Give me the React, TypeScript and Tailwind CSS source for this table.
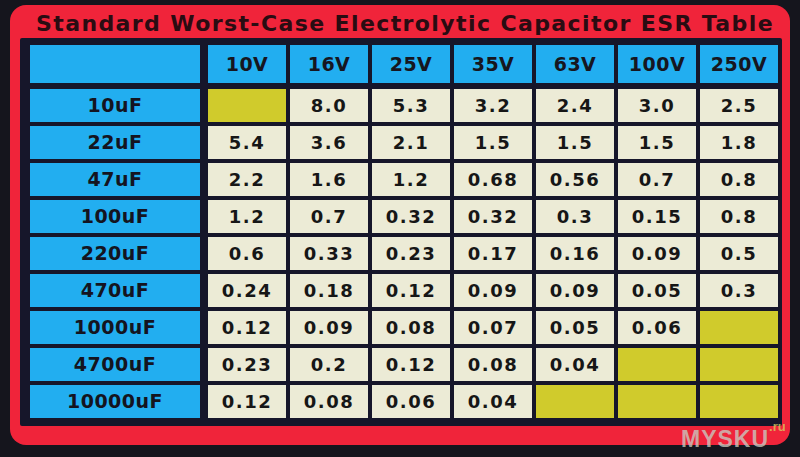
import React from 'react';

const volts = ['10V', '16V', '25V', '35V', '63V', '100V', '250V'];

// null = blank yellow cell
const rows: { cap: string; vals: (string | null)[] }[] = [
  { cap: '10uF', vals: [null, '8.0', '5.3', '3.2', '2.4', '3.0', '2.5'] },
  { cap: '22uF', vals: ['5.4', '3.6', '2.1', '1.5', '1.5', '1.5', '1.8'] },
  { cap: '47uF', vals: ['2.2', '1.6', '1.2', '0.68', '0.56', '0.7', '0.8'] },
  { cap: '100uF', vals: ['1.2', '0.7', '0.32', '0.32', '0.3', '0.15', '0.8'] },
  { cap: '220uF', vals: ['0.6', '0.33', '0.23', '0.17', '0.16', '0.09', '0.5'] },
  { cap: '470uF', vals: ['0.24', '0.18', '0.12', '0.09', '0.09', '0.05', '0.3'] },
  { cap: '1000uF', vals: ['0.12', '0.09', '0.08', '0.07', '0.05', '0.06', null] },
  { cap: '4700uF', vals: ['0.23', '0.2', '0.12', '0.08', '0.04', null, null] },
  { cap: '10000uF', vals: ['0.12', '0.08', '0.06', '0.04', null, null, null] },
];

const App = () => {
  return (
    <div className="relative w-[800px] h-[457px] bg-[#15151d] overflow-hidden font-['DejaVu_Sans','Liberation_Sans',sans-serif]">
      {/* Sticker */}
      <div className="ml-[10px] mt-[5px] w-[780px] h-[440px] rounded-[16px] bg-[#f0243a] flex flex-col items-center">
        <h1 className="h-[33px] pt-[7px] ml-[10px] text-[22px] leading-[24px] font-bold tracking-[1.4px] text-[#2a0c12] whitespace-nowrap">
          Standard Worst-Case Electrolytic Capacitor ESR Table
        </h1>

        {/* Table frame */}
        <div className="w-[762px] ml-[2px] bg-[#16162a] pl-[10px] pr-[4px] pt-[7px] pb-[8px] rounded-[2px]">
          {/* Header row */}
          <div className="flex gap-[8px] h-[38px]">
            <div className="w-[170px] bg-[#22aef0]" />
            <div className="flex-1 grid grid-cols-7 gap-[4px]">
              {volts.map((v) => (
                <div
                  key={v}
                  className="bg-[#22aef0] flex items-center justify-center text-[19px] font-bold tracking-[0.5px] text-[#161620]"
                >
                  {v}
                </div>
              ))}
            </div>
          </div>

          {/* Data rows */}
          <div className="mt-[6px] flex flex-col gap-[4px]">
            {rows.map((r) => (
              <div key={r.cap} className="flex gap-[8px] h-[33px]">
                <div className="w-[170px] bg-[#22aef0] flex items-center justify-center text-[19px] font-bold tracking-[0.5px] text-[#141420]">
                  {r.cap}
                </div>
                <div className="flex-1 grid grid-cols-7 gap-[4px]">
                  {r.vals.map((val, i) =>
                    val === null ? (
                      <div key={i} className="bg-[#d0cb2c]" />
                    ) : (
                      <div
                        key={i}
                        className="bg-[#ecebd6] flex items-center justify-center text-[18px] font-bold tracking-[1.5px] text-[#161616]"
                      >
                        {val}
                      </div>
                    )
                  )}
                </div>
              </div>
            ))}
          </div>
        </div>
      </div>

      {/* Watermark */}
      <div className="absolute left-[681px] top-[427px] flex items-start">
        <span className="text-[23px] leading-[24px] font-bold font-['Liberation_Sans',sans-serif] tracking-[1px] text-[#c8c8c0]/80">MYSKU</span>
        <span className="text-[13px] leading-[13px] font-bold font-['Liberation_Sans',sans-serif] text-[#d8c860]/80 -mt-[7px]">.ru</span>
      </div>
    </div>
  );
};

export default App;
